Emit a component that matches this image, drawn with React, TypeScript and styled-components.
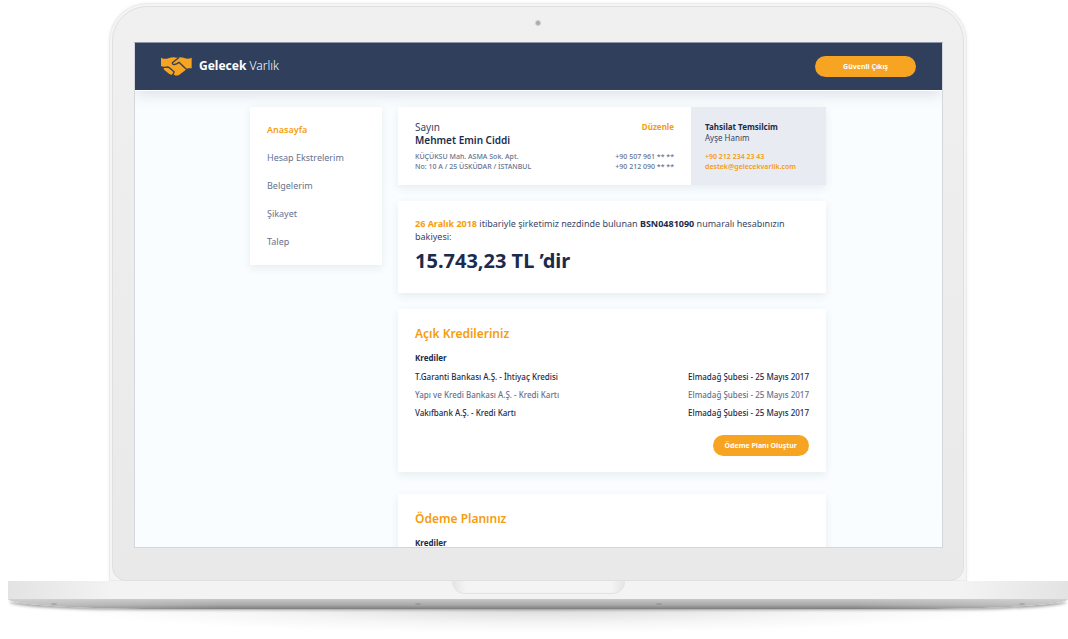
import React from 'react';
import styled, { createGlobalStyle } from 'styled-components';

const color = {
  navy: '#303f5c',
  ink: '#1c2b4b',
  body: '#384564',
  muted: '#66728f',
  orange: '#f6a421',
  orangeText: '#f59c0f',
  page: '#f9fdff',
  panel: '#e8ebf2',
};

const GlobalStyle = createGlobalStyle`
  *, *::before, *::after { box-sizing: border-box; }
  body {
    margin: 0;
    background: #fff;
    color: ${color.ink};
    font-family: "Noto Sans", "Open Sans", sans-serif;
    font-size: 9px;
  }
  h1, h2, h3, p, ul, address { margin: 0; padding: 0; font-style: normal; }
  a { color: inherit; text-decoration: none; }
`;

const Stage = styled.div`
  padding: 3px 0 30px 8px;
  overflow: hidden;
`;

const Lid = styled.div`
  margin: 0 101px;
  padding: 3px 3px 0;
  border-radius: 38px 38px 0 0;
  background: #f4f4f4;
  box-shadow: inset 0 0 0 1px #ebebeb, 0 0 4px rgba(0, 0, 0, 0.05);
`;

const Bezel = styled.div`
  display: flex;
  flex-direction: column;
  padding: 0 20px 32px 21px;
  border: 1px solid #e0e0e0;
  border-radius: 35px 35px 14px 14px;
  background: linear-gradient(#f0f0f0, #e9e9e9);
`;

const CameraRow = styled.div`
  display: flex;
  align-items: center;
  justify-content: center;
  height: 35px;
  padding: 0 1px 3px 0;
`;

const Camera = styled.span`
  width: 6px;
  height: 6px;
  border: 1px solid #cfcfcf;
  border-radius: 50%;
  background: #aaa;
`;

const Screen = styled.div`
  aspect-ratio: 8 / 5;
  overflow: hidden;
  border: 1px solid #d3d7dc;
  border-top-color: #8d96a6;
  background: ${color.page};
`;

const Header = styled.header`
  display: flex;
  align-items: center;
  justify-content: space-between;
  height: 47px;
  padding: 0 26px 1px;
  background: ${color.navy};
  box-shadow: 0 1px 0 #fff, 0 4px 16px rgba(48, 63, 92, 0.16);
`;

const Brand = styled.a`
  display: flex;
  align-items: center;
  gap: 7px;
  color: #fff;
  font-size: 12px;
  line-height: 16px;
  font-weight: 300;

  b { font-weight: 700; }
  svg { display: block; width: 31px; height: 19px; }
`;

const Pill = styled.button<{ $wide?: boolean }>`
  height: 21px;
  padding: 0 ${(p) => (p.$wide ? 28 : 12)}px;
  border: 0;
  border-radius: 11px;
  background: ${color.orange};
  color: #fff;
  font: 700 7px/21px "Noto Sans", sans-serif;
  white-space: nowrap;
`;

const Layout = styled.div`
  display: grid;
  grid-template-columns: 132px 428px;
  justify-content: center;
  align-items: start;
  gap: 16px;
  padding: 17px 1px 0 0;
`;

const Card = styled.section`
  background: #fff;
  box-shadow: 0 3px 8px rgba(48, 63, 92, 0.09);
`;

const Menu = styled(Card).attrs({ as: 'nav' })`
  padding: 9px 17px;

  ul { list-style: none; }
`;

const MenuLink = styled.a<{ $active?: boolean }>`
  display: block;
  line-height: 28px;
  color: ${(p) => (p.$active ? color.orangeText : color.muted)};
  font-weight: ${(p) => (p.$active ? 600 : 400)};
`;

const Column = styled.main`
  display: flex;
  flex-direction: column;
  gap: 16px;
`;

const ProfileCard = styled(Card)`
  display: grid;
  grid-template-columns: 1fr 135px;
`;

const Profile = styled.div`
  display: flex;
  flex-direction: column;
  gap: 5px;
  padding: 14px 17px 13px;
`;

const Split = styled.div`
  display: flex;
  justify-content: space-between;
`;

const Greeting = styled.p`
  color: ${color.body};
  font-size: 10px;
  line-height: 13px;

  strong { display: block; color: ${color.ink}; font-weight: 600; }
`;

const EditLink = styled.a`
  color: ${color.orangeText};
  font-size: 8px;
  line-height: 12px;
  font-weight: 700;
`;

const Small = styled.address`
  color: ${color.muted};
  font-size: 7px;
  line-height: 10px;
  font-weight: 500;
`;

const Agent = styled.div`
  display: flex;
  flex-direction: column;
  gap: 9px;
  padding: 14px 14px 13px;
  background: ${color.panel};
`;

const AgentName = styled.p`
  color: ${color.body};
  font-size: 8px;
  line-height: 11px;

  strong { display: block; color: ${color.ink}; }
`;

const AgentContact = styled.address`
  display: flex;
  flex-direction: column;
  color: ${color.orangeText};
  font-size: 7px;
  line-height: 10px;
  font-weight: 600;
`;

const BalanceCard = styled(Card)`
  padding: 16px 17px 18px;
`;

const BalanceText = styled.p`
  margin-bottom: 4px;
  color: ${color.body};
  line-height: 13px;

  em { color: ${color.orangeText}; font-style: normal; font-weight: 700; }
  strong { color: ${color.ink}; }
`;

const Amount = styled.h1`
  font-size: 20px;
  line-height: 28px;
  font-weight: 700;
`;

const LoanCard = styled(Card)<{ $apart?: boolean }>`
  display: flex;
  flex-direction: column;
  margin-top: ${(p) => (p.$apart ? 6 : 0)}px;
  padding: 15px 17px 16px;
`;

const Title = styled.h2`
  margin-bottom: 4px;
  color: ${color.orangeText};
  font-size: 12px;
  line-height: 20px;
  font-weight: 600;
`;

const LoanTable = styled.table`
  width: 100%;
  border-collapse: collapse;
  font-size: 8px;
  line-height: 18px;

  caption { text-align: left; line-height: 20px; font-weight: 700; }
  td { padding: 0; font-weight: 500; }
  td:last-child { text-align: right; }
`;

const LoanRow = styled.tr<{ $dim?: boolean }>`
  color: ${(p) => (p.$dim ? color.muted : color.ink)};
`;

const Actions = styled.div`
  display: flex;
  justify-content: flex-end;
  margin-top: 13px;
`;

const Base = styled.div`
  display: flex;
  justify-content: center;
  height: 18px;
  background: linear-gradient(90deg, #e3e3e3, #f3f3f3 10%, #f3f3f3 90%, #e3e3e3);
`;

const Notch = styled.div`
  width: 173px;
  height: 13px;
  border-radius: 0 0 14px 14px;
  background: linear-gradient(90deg, #e4e4e4, #f4f4f4 8%, #f4f4f4 92%, #e4e4e4);
  box-shadow: inset 0 -1px 1px #e2e2e2;
`;

const Underside = styled.div`
  display: flex;
  align-items: center;
  justify-content: space-between;
  height: 10px;
  padding: 0 43px;
  border-radius: 0 0 150px 150px / 0 0 10px 10px;
  background:
    linear-gradient(90deg, rgba(215, 215, 215, 0.6), rgba(215, 215, 215, 0) 20%, rgba(215, 215, 215, 0) 80%, rgba(215, 215, 215, 0.6)),
    linear-gradient(#c8c8c8, #a8a8a8 60%, #7c7c7c);
  box-shadow: 0 2px 3px -1px rgba(0, 0, 0, 0.35);
`;

const Foot = styled.span`
  width: 6px;
  height: 2px;
  border-radius: 50%;
  background: rgba(110, 110, 110, 0.3);
`;

const InnerFeet = styled.span`
  display: flex;
  justify-content: space-between;
  width: 247px;
`;

const GroundShadow = styled.div`
  height: 24px;
  margin: 0 60px;
  background: radial-gradient(ellipse 50% 100% at 50% 0, rgba(0, 0, 0, 0.14), rgba(0, 0, 0, 0.04) 60%, transparent);
`;

const Handshake = () => (
  <svg viewBox="0 0 93 57" aria-hidden="true">
    <path
      fill={color.orange}
      d="M0 2 Q11 8 22 4 Q34 -1 48 2 Q60 -1 72 4 Q82 7 92 2 V34 H82 Q77 35 74 39 L55 53 Q48 58 40 54 L36 51 Q31 55 25 51 L10 39 Q6 35 10 31 L0 28 Z"
    />
    <g fill="none" stroke={color.navy} strokeWidth="4" strokeLinecap="round" strokeLinejoin="round">
      <path d="M53 2 L34 17 Q34 24 42 22 Q49 21 54 16 L76 37" />
      <path d="M0 31 L13 31 Q20 28 26 33 L39 44 Q40 48 35 53" />
    </g>
  </svg>
);

const menu = ['Anasayfa', 'Hesap Ekstrelerim', 'Belgelerim', 'Şikayet', 'Talep'];

const loans = [
  { name: 'T.Garanti Bankası A.Ş. - İhtiyaç Kredisi', branch: 'Elmadağ Şubesi - 25 Mayıs 2017' },
  { name: 'Yapı ve Kredi Bankası A.Ş. - Kredi Kartı', branch: 'Elmadağ Şubesi - 25 Mayıs 2017', dim: true },
  { name: 'Vakıfbank A.Ş. - Kredi Kartı', branch: 'Elmadağ Şubesi - 25 Mayıs 2017' },
];

export default function App() {
  return (
    <>
      <GlobalStyle />
      <Stage>
        <Lid>
          <Bezel>
            <CameraRow><Camera /></CameraRow>
            <Screen>
              <Header>
                <Brand href="#">
                  <Handshake />
                  <span><b>Gelecek</b> Varlık</span>
                </Brand>
                <Pill type="button" $wide>Güvenli Çıkış</Pill>
              </Header>
              <Layout>
                <Menu>
                  <ul>
                    {menu.map((item, i) => (
                      <li key={item}><MenuLink href="#" $active={i === 0}>{item}</MenuLink></li>
                    ))}
                  </ul>
                </Menu>
                <Column>
                  <ProfileCard>
                    <Profile>
                      <Split>
                        <Greeting>Sayın <strong>Mehmet Emin Ciddi</strong></Greeting>
                        <EditLink href="#">Düzenle</EditLink>
                      </Split>
                      <Split>
                        <Small>KÜÇÜKSU Mah. ASMA Sok. Apt.<br />No: 10 A / 25 ÜSKÜDAR / İSTANBUL</Small>
                        <Small>+90 507 961 ** **<br />+90 212 090 ** **</Small>
                      </Split>
                    </Profile>
                    <Agent>
                      <AgentName><strong>Tahsilat Temsilcim</strong>Ayşe Hanım</AgentName>
                      <AgentContact>
                        <a href="tel:+902122342343">+90 212 234 23 43</a>
                        <a href="mailto:destek@gelecekvarlik.com">destek@gelecekvarlik.com</a>
                      </AgentContact>
                    </Agent>
                  </ProfileCard>
                  <BalanceCard>
                    <BalanceText>
                      <em>26 Aralık 2018</em> itibariyle şirketimiz nezdinde bulunan <strong>BSN0481090</strong> numaralı hesabınızın bakiyesi:
                    </BalanceText>
                    <Amount>15.743,23 TL ’dir</Amount>
                  </BalanceCard>
                  <LoanCard>
                    <Title>Açık Kredileriniz</Title>
                    <LoanTable>
                      <caption>Krediler</caption>
                      <tbody>
                        {loans.map((loan) => (
                          <LoanRow key={loan.name} $dim={loan.dim}>
                            <td>{loan.name}</td>
                            <td>{loan.branch}</td>
                          </LoanRow>
                        ))}
                      </tbody>
                    </LoanTable>
                    <Actions><Pill type="button">Ödeme Planı Oluştur</Pill></Actions>
                  </LoanCard>
                  <LoanCard $apart>
                    <Title>Ödeme Planınız</Title>
                    <LoanTable>
                      <caption>Krediler</caption>
                    </LoanTable>
                  </LoanCard>
                </Column>
              </Layout>
            </Screen>
          </Bezel>
        </Lid>
        <Base><Notch /></Base>
        <Underside>
          <Foot />
          <InnerFeet><Foot /><Foot /></InnerFeet>
          <Foot />
        </Underside>
        <GroundShadow />
      </Stage>
    </>
  );
}
